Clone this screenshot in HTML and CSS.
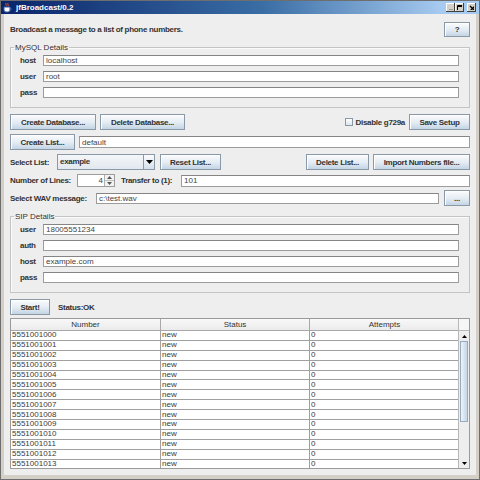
FILE: index.html
```html
<!DOCTYPE html>
<html lang="en">
<head>
    <meta charset="UTF-8">
    <title>jfBroadcast/0.2</title>
    <link rel="stylesheet" href="styles.css">
</head>
<body>
    <div class="window">
        <div class="titlebar">
            <svg class="app-icon" width="9" height="10" viewBox="0 0 9 10">
                <path d="M3 0c-1 1 1 2 0 3M5 0c-1 1 1 2 0 3" stroke="#e0602a" fill="none"/>
                <path d="M1 4h6v3a2 2 0 0 1-2 2H3a2 2 0 0 1-2-2z" fill="#fff" stroke="#3a5fa8"/>
                <path d="M7 5h1v2H7" stroke="#3a5fa8" fill="none"/>
            </svg>
            <span class="title">jfBroadcast/0.2</span>
            <div class="caption-btns">
                <span class="cap-btn"><svg width="7" height="7"><path d="M1 5.5h4" stroke="#000" stroke-width="1.5"/></svg></span>
                <span class="cap-btn"><svg width="7" height="7"><path d="M0.5 0.5h6v6h-6z M0.5 1.5h6" stroke="#000" fill="none"/></svg></span>
                <span class="cap-btn close"><svg width="7" height="7"><path d="M1 1l5 5M6 1l-5 5" stroke="#000" stroke-width="1.3"/></svg></span>
            </div>
        </div>

        <div class="content">
            <div class="row head">
                <span class="bold">Broadcast a message to a list of phone numbers.</span>
                <button class="btn w-help">?</button>
            </div>

            <fieldset class="group">
                <legend>MySQL Details</legend>
                <div class="fields">
                    <label>host</label><input type="text" class="text" value="localhost">
                    <label>user</label><input type="text" class="text" value="root">
                    <label>pass</label><input type="password" class="text">
                </div>
            </fieldset>

            <div class="row r-a">
                <button class="btn w-createdb">Create Database...</button>
                <button class="btn w-deletedb">Delete Database...</button>
                <span class="spacer"></span>
                <span class="check"></span>
                <span class="bold check-label">Disable g729a</span>
                <button class="btn w-save">Save Setup</button>
            </div>

            <div class="row r-b">
                <button class="btn w-createlist">Create List...</button>
                <input type="text" class="text grow h12" value="default">
            </div>

            <div class="row r-c">
                <span class="bold lbl-select">Select List:</span>
                <div class="combo">
                    <span class="combo-value">example</span>
                    <span class="combo-arrow"><svg width="7" height="4"><path d="M0 0h7L3.5 4z" fill="#000"/></svg></span>
                </div>
                <button class="btn w-reset">Reset List...</button>
                <span class="spacer"></span>
                <button class="btn w-dellist">Delete List...</button>
                <button class="btn w-import">Import Numbers file...</button>
            </div>

            <div class="row r-d">
                <span class="bold lbl-lines">Number of Lines:</span>
                <div class="spinner">
                    <span class="spin-value">4</span>
                    <span class="spin-btns">
                        <span class="spin-btn"><svg width="5" height="3"><path d="M0 3h5L2.5 0z" fill="#555"/></svg></span>
                        <span class="spin-btn"><svg width="5" height="3"><path d="M0 0h5L2.5 3z" fill="#555"/></svg></span>
                    </span>
                </div>
                <span class="bold lbl-transfer">Transfer to (1):</span>
                <input type="text" class="text grow h12" value="101">
            </div>

            <div class="row r-e">
                <span class="bold lbl-wav">Select WAV message:</span>
                <input type="text" class="text grow" value="c:\test.wav">
                <button class="btn w-browse">...</button>
            </div>

            <fieldset class="group sip">
                <legend>SIP Details</legend>
                <div class="fields">
                    <label>user</label><input type="text" class="text" value="18005551234">
                    <label>auth</label><input type="text" class="text">
                    <label>host</label><input type="text" class="text" value="example.com">
                    <label>pass</label><input type="password" class="text">
                </div>
            </fieldset>

            <div class="row r-start">
                <button class="btn w-start">Start!</button>
                <span class="bold status">Status:OK</span>
            </div>

            <div class="table-pane">
                <div class="table-view">
                    <table class="data-table">
                        <colgroup><col class="c1"><col class="c2"><col class="c3"></colgroup>
                        <thead>
                            <tr><th>Number</th><th>Status</th><th>Attempts</th></tr>
                        </thead>
                        <tbody>
                            <tr><td>5551001000</td><td>new</td><td>0</td></tr>
                            <tr><td>5551001001</td><td>new</td><td>0</td></tr>
                            <tr><td>5551001002</td><td>new</td><td>0</td></tr>
                            <tr><td>5551001003</td><td>new</td><td>0</td></tr>
                            <tr><td>5551001004</td><td>new</td><td>0</td></tr>
                            <tr><td>5551001005</td><td>new</td><td>0</td></tr>
                            <tr><td>5551001006</td><td>new</td><td>0</td></tr>
                            <tr><td>5551001007</td><td>new</td><td>0</td></tr>
                            <tr><td>5551001008</td><td>new</td><td>0</td></tr>
                            <tr><td>5551001009</td><td>new</td><td>0</td></tr>
                            <tr><td>5551001010</td><td>new</td><td>0</td></tr>
                            <tr><td>5551001011</td><td>new</td><td>0</td></tr>
                            <tr><td>5551001012</td><td>new</td><td>0</td></tr>
                            <tr><td>5551001013</td><td>new</td><td>0</td></tr>
                        </tbody>
                    </table>
                </div>
                <div class="vscroll">
                    <div class="corner"></div>
                    <div class="arrow"><svg width="5" height="3"><path d="M0 3h5L2.5 0z" fill="#000"/></svg></div>
                    <div class="track"><div class="thumb"></div></div>
                    <div class="arrow"><svg width="5" height="3"><path d="M0 0h5L2.5 3z" fill="#000"/></svg></div>
                </div>
            </div>
        </div>
    </div>
</body>
</html>
```

FILE: styles.css
```css
/* fenetre facon Java Metal/Ocean */
body {
    margin: 0;
    background: #ffffff;
    font-family: "Liberation Sans", Arial, sans-serif;
    font-size: 8px;
    color: #333;
}

.window {
    width: 480px;
    height: 480px;
    box-sizing: border-box;
    border: 1px solid #6e6e6e;
    background: #d4d0c8;
    display: flex;
    flex-direction: column;
}

/* barre de titre */
.titlebar {
    height: 13px;
    flex-shrink: 0;
    display: flex;
    align-items: center;
    padding-left: 2px;
    background: linear-gradient(to right, #0a246a, #3a6ea5 55%, #a6caf0 92%);
}

.app-icon {
    flex-shrink: 0;
}

.title {
    margin-left: 4px;
    color: #fff;
    font-weight: bold;
    font-size: 8px;
}

.caption-btns {
    margin-left: auto;
    display: flex;
    margin-right: 3px;
}

.cap-btn {
    width: 9px;
    height: 9px;
    box-sizing: border-box;
    background: #d4d0c8;
    box-shadow: inset -1px -1px #404040, inset 1px 1px #ffffff;
    display: flex;
    align-items: center;
    justify-content: center;
}

.cap-btn svg {
    width: 5px;
    height: 5px;
}

.cap-btn.close {
    margin-left: 3px;
}

/* contenu */
.content {
    flex: 1;
    margin: 0 3px 4px;
    background: #eeeeee;
    padding: 8px 6px 0 6px;
}

.bold {
    font-weight: bold;
    letter-spacing: -0.3px;
    white-space: nowrap;
}

.row {
    display: flex;
    align-items: center;
    gap: 4px;
    height: 16px;
}

.head {
    height: 15px;
    justify-content: space-between;
}

.spacer {
    flex: 1;
}

/* boutons */
.btn {
    height: 16px;
    box-sizing: border-box;
    margin: 0;
    padding: 0;
    border: 1px solid #8a99a8;
    border-radius: 0;
    background: linear-gradient(#fbfcfd, #e3ebf3 55%, #c4d4e4);
    box-shadow: inset 1px 1px #ffffff;
    font-family: "Liberation Sans", Arial, sans-serif;
    font-size: 8px;
    font-weight: bold;
    letter-spacing: -0.3px;
    color: #333;
    flex-shrink: 0;
}

.w-help { width: 26px; height: 15px; }
.w-createdb { width: 86px; }
.w-deletedb { width: 85px; }
.w-save { width: 61px; }
.w-createlist { width: 65px; }
.w-reset { width: 61px; margin-left: 1px; }
.w-dellist { width: 63px; }
.w-import { width: 97px; }
.w-browse { width: 26px; margin-left: 1px; }
.w-start { width: 40px; }

/* champs texte */
.text {
    height: 11px;
    box-sizing: border-box;
    margin: 0;
    padding: 0 2px;
    border: 1px solid #9c9c9c;
    border-top-color: #858585;
    background: #ffffff;
    font-family: "Liberation Sans", Arial, sans-serif;
    font-size: 8px;
    color: #444;
    min-width: 0;
}

.grow {
    flex: 1;
}

.h12 {
    height: 12px;
}

/* cadres */
.group {
    margin: 6px 0 0;
    padding: 3px 10px 9px 9px;
    border: 1px solid #c4c4c4;
    box-shadow: inset 1px 1px #fafafa;
    min-width: 0;
}

.group legend {
    margin-left: -6px;
    padding: 0 1px;
    font-size: 8px;
    line-height: 9px;
    color: #333;
}

.fields {
    display: grid;
    grid-template-columns: 17px 1fr;
    column-gap: 6px;
    row-gap: 5px;
    align-items: center;
}

.fields label {
    font-weight: bold;
    letter-spacing: -0.3px;
    line-height: 11px;
}

.r-a { margin-top: 6px; }
.r-b { margin-top: 4px; }
.r-c { margin-top: 4px; }
.r-d { margin-top: 4px; height: 13px; }
.r-e { margin-top: 3px; }
.sip { margin-top: 6px; }
.r-start { margin-top: 6px; }

.check {
    width: 8px;
    height: 8px;
    box-sizing: border-box;
    border: 1px solid #8a99a8;
    background: linear-gradient(#ffffff, #dbe4ee);
    margin-right: -1px;
}

.lbl-select { width: 43px; }
.lbl-lines { width: 63px; }
.lbl-transfer { width: 56px; margin-left: 2px; }
.lbl-wav { width: 82px; }

.status { margin-left: 4px; }

/* liste deroulante */
.combo {
    width: 98px;
    height: 16px;
    box-sizing: border-box;
    display: flex;
    border: 1px solid #8a99a8;
    background: linear-gradient(#f4f6f9, #e2e8ef);
}

.combo-value {
    flex: 1;
    padding-left: 2px;
    font-weight: bold;
    letter-spacing: -0.3px;
    line-height: 14px;
}

.combo-arrow {
    width: 10px;
    border-left: 1px solid #8a99a8;
    display: flex;
    align-items: center;
    justify-content: center;
    background: linear-gradient(#fbfcfd, #d4dfea);
}

/* spinner */
.spinner {
    width: 38px;
    height: 13px;
    box-sizing: border-box;
    display: flex;
    border: 1px solid #9c9c9c;
    background: #ffffff;
    flex-shrink: 0;
}

.spin-value {
    flex: 1;
    text-align: right;
    padding-right: 1px;
    line-height: 11px;
    color: #444;
}

.spin-btns {
    width: 9px;
    display: flex;
    flex-direction: column;
    border-left: 1px solid #b0b0b0;
}

.spin-btn {
    flex: 1;
    display: flex;
    align-items: center;
    justify-content: center;
    background: #f2f2f2;
}

.spin-btn + .spin-btn {
    border-top: 1px solid #c0c0c0;
}

/* tableau */
.table-pane {
    margin-top: 3px;
    height: 151px;
    box-sizing: border-box;
    border: 1px solid #9a9a9a;
    display: flex;
    background: #ffffff;
}

.table-view {
    flex: 1;
    overflow: hidden;
}

.data-table {
    width: 448px;
    table-layout: fixed;
    border-collapse: separate;
    border-spacing: 0;
}

.c1 { width: 150px; }
.c2 { width: 149px; }
.c3 { width: 149px; }

.data-table th {
    height: 12px;
    box-sizing: border-box;
    padding: 0;
    font-weight: normal;
    font-size: 8px;
    line-height: 10px;
    color: #333;
    background: linear-gradient(#f8f8f8, #ebebeb);
    border-right: 1px solid #a8a8a8;
    border-bottom: 1px solid #a8a8a8;
}

.data-table td {
    height: 9.9px;
    box-sizing: border-box;
    padding: 0 1px;
    font-size: 8px;
    line-height: 8px;
    color: #3a3a3a;
    white-space: nowrap;
    overflow: hidden;
    border-right: 1px solid #a0a0a0;
    border-bottom: 1px solid #a0a0a0;
}

.data-table th:last-child,
.data-table td:last-child {
    border-right: none;
}

.vscroll {
    width: 10px;
    display: flex;
    flex-direction: column;
    border-left: 1px solid #b8b8b8;
    background: #eeeeee;
}

.corner {
    height: 12px;
    box-sizing: border-box;
    background: #f6f6f6;
    border-bottom: 1px solid #b8b8b8;
}

.arrow {
    height: 10px;
    display: flex;
    align-items: center;
    justify-content: center;
}

.track {
    flex: 1;
    padding: 0 1px;
}

.thumb {
    height: 81px;
    box-sizing: border-box;
    border: 1px solid #97abbf;
    background: linear-gradient(to right, #eef3f8, #c6d6e6);
}
```
